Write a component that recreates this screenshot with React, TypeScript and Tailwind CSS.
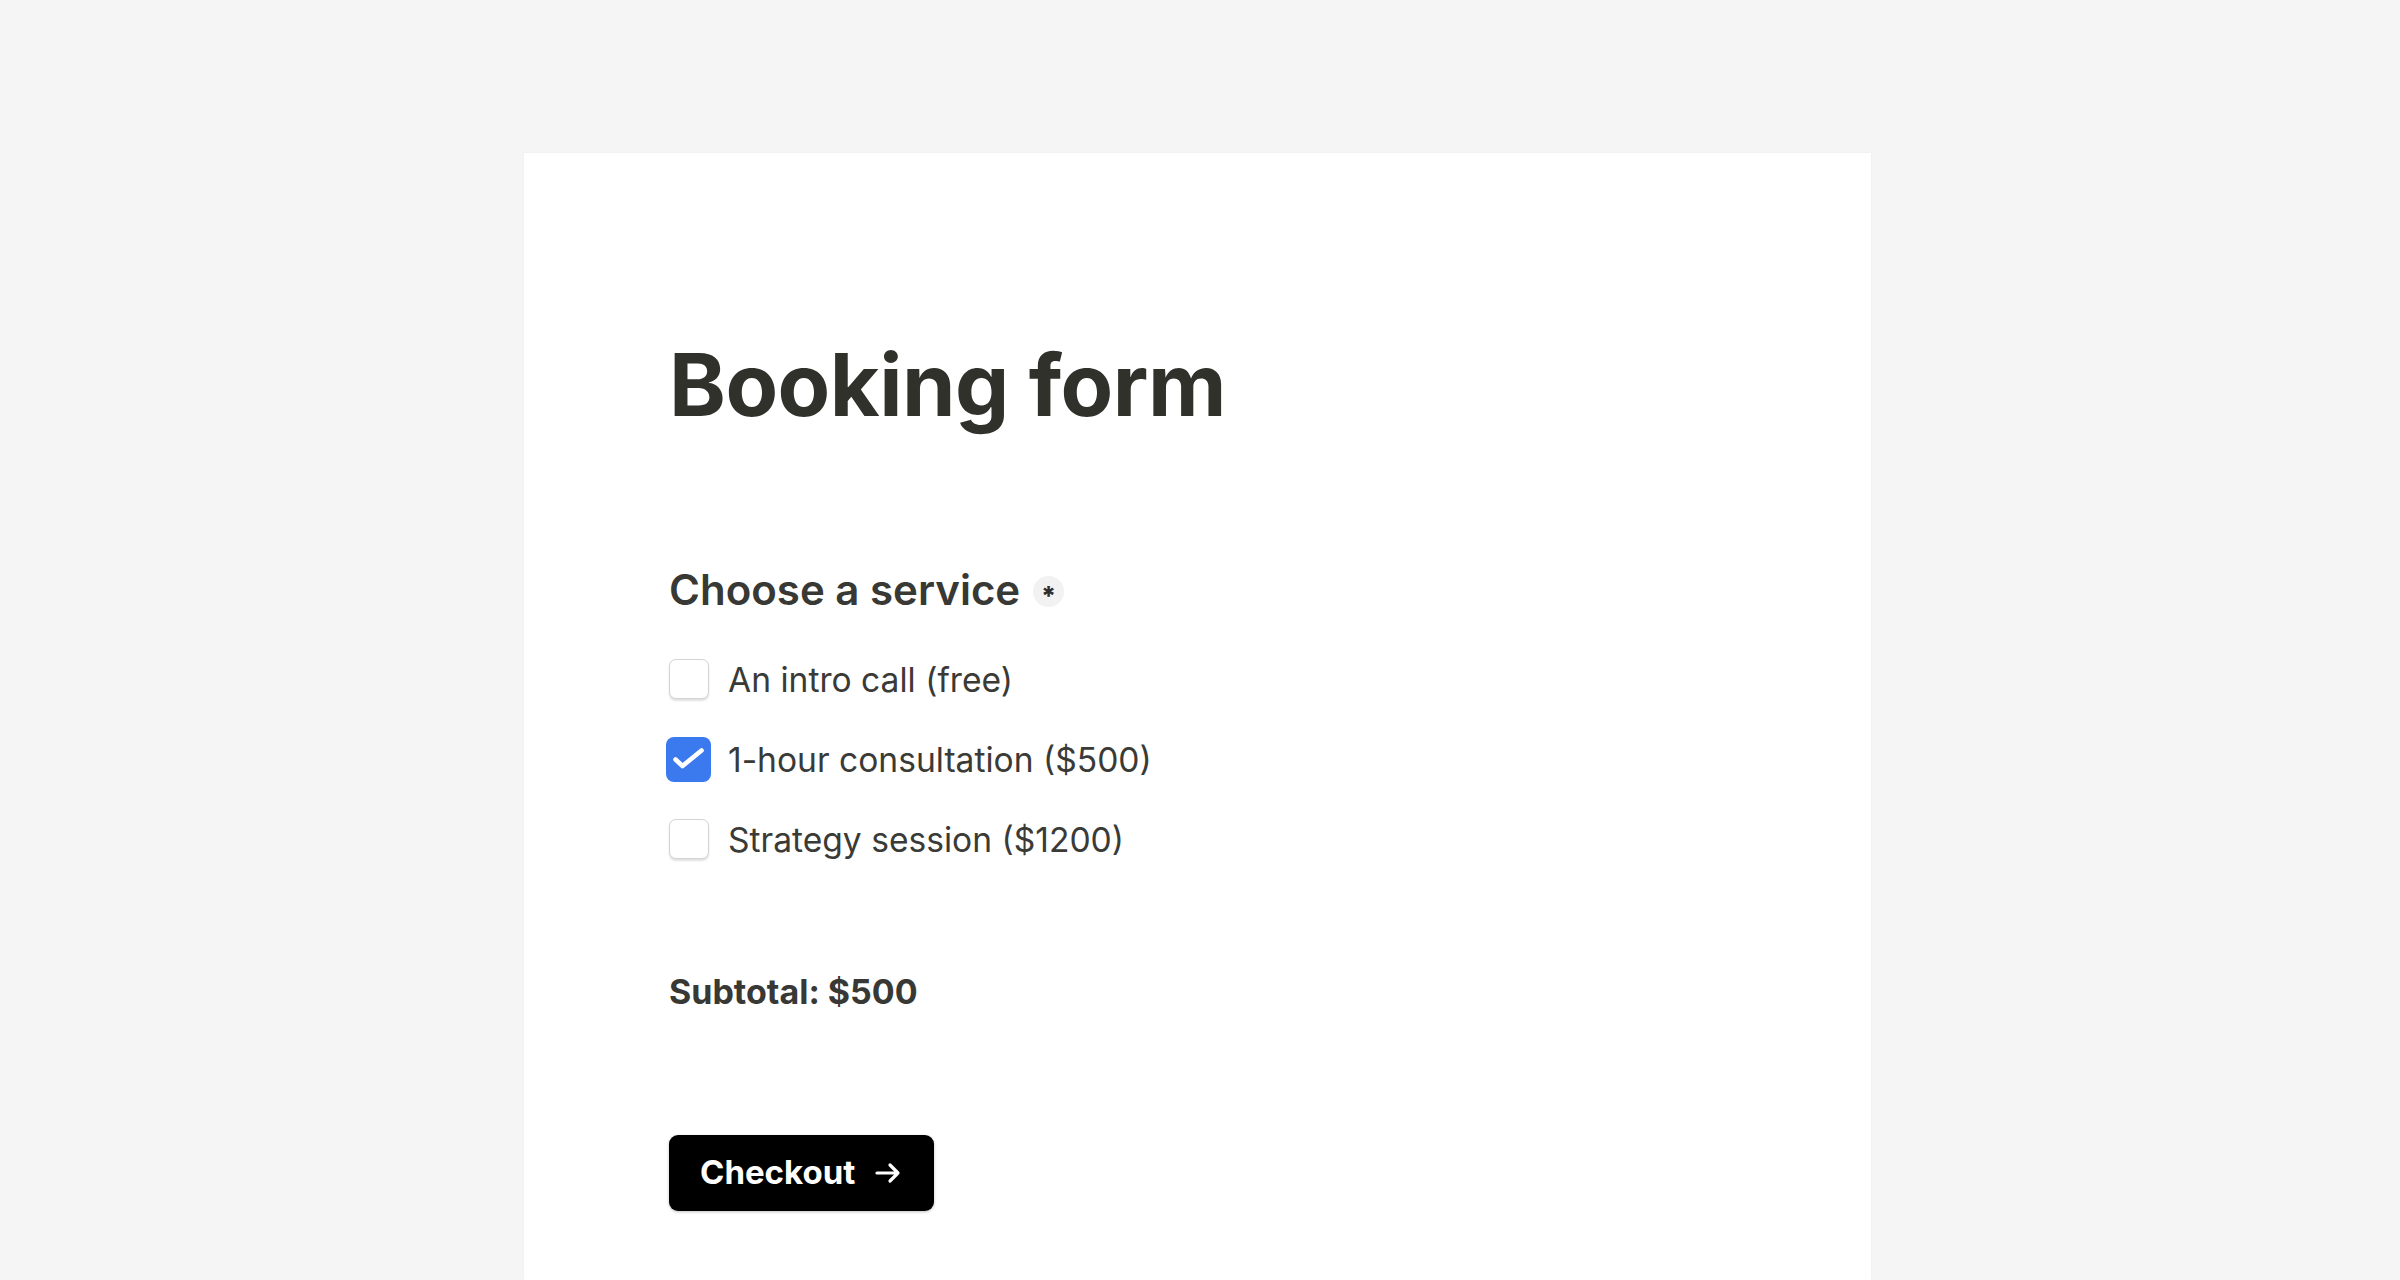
import { useState } from 'react';

const services = [
    { id: 'intro', label: 'An intro call (free)', price: 0 },
    { id: 'consult', label: '1-hour consultation ($500)', price: 500 },
    { id: 'strategy', label: 'Strategy session ($1200)', price: 1200 },
];

function Checkbox({ checked }: { checked: boolean }) {
    if (checked) {
        // checked box is drawn a little larger (focus ring look), negative margins keep the row aligned
        return (
            <span className="-ml-[3px] -mr-[2px] w-[45px] h-[45px] rounded-[8px] bg-[#3a79ee] flex-shrink-0">
                <svg width="45" height="45" viewBox="0 0 45 45" fill="none">
                    <path d="M9.5 22.5 L16.5 29 L35.5 13.5" stroke="white" strokeWidth="4.6" strokeLinecap="round" strokeLinejoin="round" />
                </svg>
            </span>
        );
    }
    return (
        <span className="w-[40px] h-[40px] rounded-[7px] bg-white border-[1.5px] border-[#d4d4d4] shadow-[0_1.5px_2px_rgba(0,0,0,0.12)] flex-shrink-0" />
    );
}

export default function App() {
    const [selected, setSelected] = useState<string[]>(['consult']);

    const toggle = (id: string) => {
        setSelected((prev) => (prev.includes(id) ? prev.filter((s) => s !== id) : [...prev, id]));
    };

    const subtotal = services.filter((s) => selected.includes(s.id)).reduce((sum, s) => sum + s.price, 0);

    return (
        <div className="min-h-screen bg-[#f5f5f5] pt-[153px] pr-[5px] flex justify-center font-['Inter','Noto_Sans',sans-serif]">
            <div className="w-[1347px] min-h-[1127px] bg-white shadow-[0_0_2px_rgba(0,0,0,0.04)] pl-[145px] pt-[180px]">
                <h1 className="text-[86px] leading-[104px] font-bold tracking-[-0.006em] text-[#31312c]">Booking form</h1>

                {/* Service choice */}
                <div className="mt-[128px] flex items-center h-[49px]">
                    <h2 className="text-[42px] leading-[49px] font-semibold text-[#383835]">Choose a service</h2>
                    <span className="ml-[13px] mt-[4px] w-[31px] h-[31px] rounded-full bg-[#f2f2f2] flex items-center justify-center text-[26px] font-extrabold text-[#2e2e2e] leading-none pt-[9px]">
                        *
                    </span>
                </div>

                <div className="mt-[45px] flex flex-col gap-[40px]">
                    {services.map((s) => (
                        <label key={s.id} className="flex items-center h-[40px] cursor-pointer" onClick={() => toggle(s.id)}>
                            <Checkbox checked={selected.includes(s.id)} />
                            <span className="ml-[19px] mt-[2px] text-[33.6px] leading-[40px] text-[#3a3a37]">{s.label}</span>
                        </label>
                    ))}
                </div>

                <p className="mt-[113px] text-[34px] leading-[40px] font-bold text-[#383835]">Subtotal: ${subtotal}</p>

                <button className="mt-[123px] h-[76px] flex items-center gap-[20px] pl-[31px] pr-[33px] bg-black rounded-[9px] shadow-[0_1px_3px_rgba(0,0,0,0.25)] text-white text-[33px] font-bold">
                    Checkout
                    <svg width="26" height="24" viewBox="0 0 26 24" fill="none">
                        <path d="M2 12 H23 M15 4 L23 12 L15 20" stroke="white" strokeWidth="3.2" strokeLinecap="round" strokeLinejoin="round" />
                    </svg>
                </button>
            </div>
        </div>
    );
}
